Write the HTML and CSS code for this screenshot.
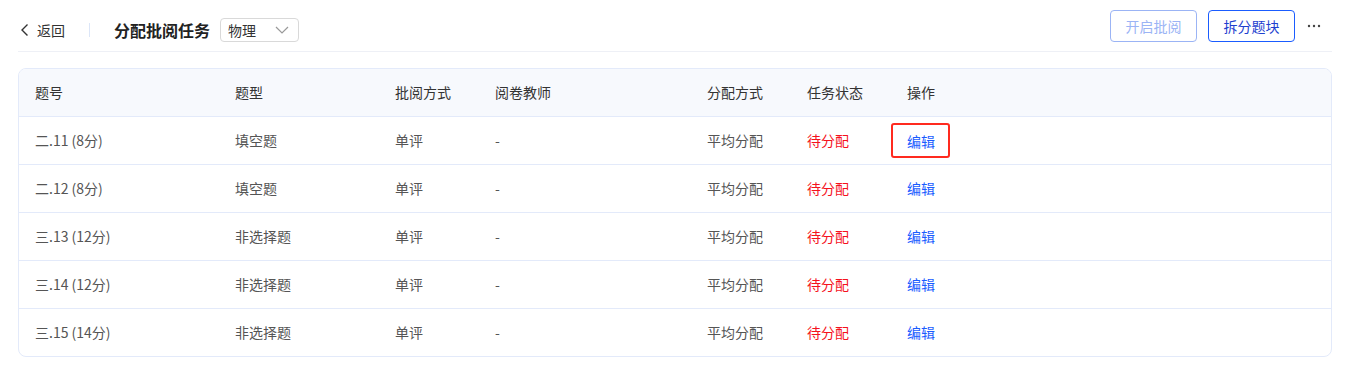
FILE: index.html
```html
<!DOCTYPE html>
<html lang="zh-CN">
<head>
  <meta charset="UTF-8">
  <meta name="viewport" content="width=device-width, initial-scale=1.0">
  <title>分配批阅任务</title>
  <link rel="stylesheet" href="styles.css">
</head>
<body>
  <div class="page">
    <div class="header">
      <div class="header-left">
        <a class="back">
          <svg width="9" height="14" viewBox="0 0 9 14"><path d="M7.5 1.5 L2 7 L7.5 12.5" fill="none" stroke="#333" stroke-width="1.4"/></svg>
          <span>返回</span>
        </a>
        <span class="divider"></span>
        <span class="title">分配批阅任务</span>
        <div class="select">
          <span>物理</span>
          <svg width="14" height="8" viewBox="0 0 14 8"><path d="M1 1 L7 7 L13 1" fill="none" stroke="#999" stroke-width="1.2"/></svg>
        </div>
      </div>
      <div class="header-right">
        <button class="btn btn-disabled">开启批阅</button>
        <button class="btn btn-outline">拆分题块</button>
        <svg class="more" width="14" height="4" viewBox="0 0 14 4">
          <circle cx="2" cy="2" r="1.2" fill="#444"/>
          <circle cx="7" cy="2" r="1.2" fill="#444"/>
          <circle cx="12" cy="2" r="1.2" fill="#444"/>
        </svg>
      </div>
    </div>

    <div class="table-wrap">
      <table class="tasks">
        <colgroup>
          <col class="c1"><col class="c2"><col class="c3"><col class="c4">
          <col class="c5"><col class="c6"><col class="c7">
        </colgroup>
        <thead>
          <tr>
            <th>题号</th><th>题型</th><th>批阅方式</th><th>阅卷教师</th>
            <th>分配方式</th><th>任务状态</th><th>操作</th>
          </tr>
        </thead>
        <tbody>
          <tr>
            <td>二.11 (8分)</td><td>填空题</td><td>单评</td><td>-</td>
            <td>平均分配</td><td class="status">待分配</td>
            <td><span class="edit highlight">编辑</span></td>
          </tr>
          <tr>
            <td>二.12 (8分)</td><td>填空题</td><td>单评</td><td>-</td>
            <td>平均分配</td><td class="status">待分配</td>
            <td><span class="edit">编辑</span></td>
          </tr>
          <tr>
            <td>三.13 (12分)</td><td>非选择题</td><td>单评</td><td>-</td>
            <td>平均分配</td><td class="status">待分配</td>
            <td><span class="edit">编辑</span></td>
          </tr>
          <tr>
            <td>三.14 (12分)</td><td>非选择题</td><td>单评</td><td>-</td>
            <td>平均分配</td><td class="status">待分配</td>
            <td><span class="edit">编辑</span></td>
          </tr>
          <tr>
            <td>三.15 (14分)</td><td>非选择题</td><td>单评</td><td>-</td>
            <td>平均分配</td><td class="status">待分配</td>
            <td><span class="edit">编辑</span></td>
          </tr>
        </tbody>
      </table>
    </div>
  </div>
</body>
</html>
```

FILE: styles.css
```css
body {
  margin: 0;
  padding: 0;
  font-family: "Noto Sans CJK SC", "Noto Sans", sans-serif;
  font-size: 14px;
  color: #333;
  background: #fff;
}

.page {
  padding: 0 13px 0 18px;
}

.header {
  display: flex;
  justify-content: space-between;
  align-items: center;
  height: 41px;
  padding-top: 10px;
  border-bottom: 1px solid #eef0f6;
}

.header-left {
  display: flex;
  align-items: center;
  height: 32px;
  margin-top: -2px;
}

.back {
  display: flex;
  align-items: center;
  gap: 8px;
  padding-left: 2px;
  color: #333;
  cursor: pointer;
}

.divider {
  width: 1px;
  height: 14px;
  background: #dce6f8;
  margin: 0 24px 0 24px;
}

.title {
  font-size: 16px;
  font-weight: bold;
  color: #222;
}

.select {
  display: flex;
  align-items: center;
  justify-content: space-between;
  box-sizing: border-box;
  width: 79px;
  height: 24px;
  margin-left: 10px;
  padding: 0 9px 0 7px;
  border: 1px solid #d9d9d9;
  border-radius: 4px;
}

.header-right {
  display: flex;
  align-items: center;
  height: 32px;
  align-self: flex-start;
}

.btn {
  box-sizing: border-box;
  width: 87px;
  height: 32px;
  margin-left: 11px;
  font-family: inherit;
  font-size: 14px;
  background: #fff;
  border-radius: 4px;
  cursor: pointer;
}

.btn-disabled {
  color: #9bb4f5;
  border: 1px solid #9bb4f5;
  cursor: not-allowed;
}

.btn-outline {
  color: #1e3fcf;
  border: 1px solid #1a5cff;
}

.more {
  margin-left: 12px;
  margin-right: 11px;
}

.table-wrap {
  margin-top: 16px;
  border: 1px solid #e3eafa;
  border-radius: 8px;
  overflow: hidden;
}

.tasks {
  width: 100%;
  border-collapse: collapse;
  table-layout: fixed;
}

.c1 { width: 200px; }
.c2 { width: 160px; }
.c3 { width: 100px; }
.c4 { width: 212px; }
.c5 { width: 100px; }
.c6 { width: 100px; }

.tasks th,
.tasks td {
  height: 45px;
  padding: 0 0 2px 16px;
  text-align: left;
  font-weight: normal;
  white-space: nowrap;
}

.tasks th {
  background: #f7f9fd;
  color: #333;
}

.tasks td {
  color: #555;
  border-top: 1px solid #e3eafa;
}

.tasks td.status {
  color: #f5121d;
}

.edit {
  display: inline-block;
  color: #1a5cff;
  cursor: pointer;
}

.edit.highlight {
  margin: -6px 0 -10px -16px;
  padding: 6px 13px 5px 14px;
  border: 2px solid #ff2a1f;
  border-radius: 3px;
}
```
